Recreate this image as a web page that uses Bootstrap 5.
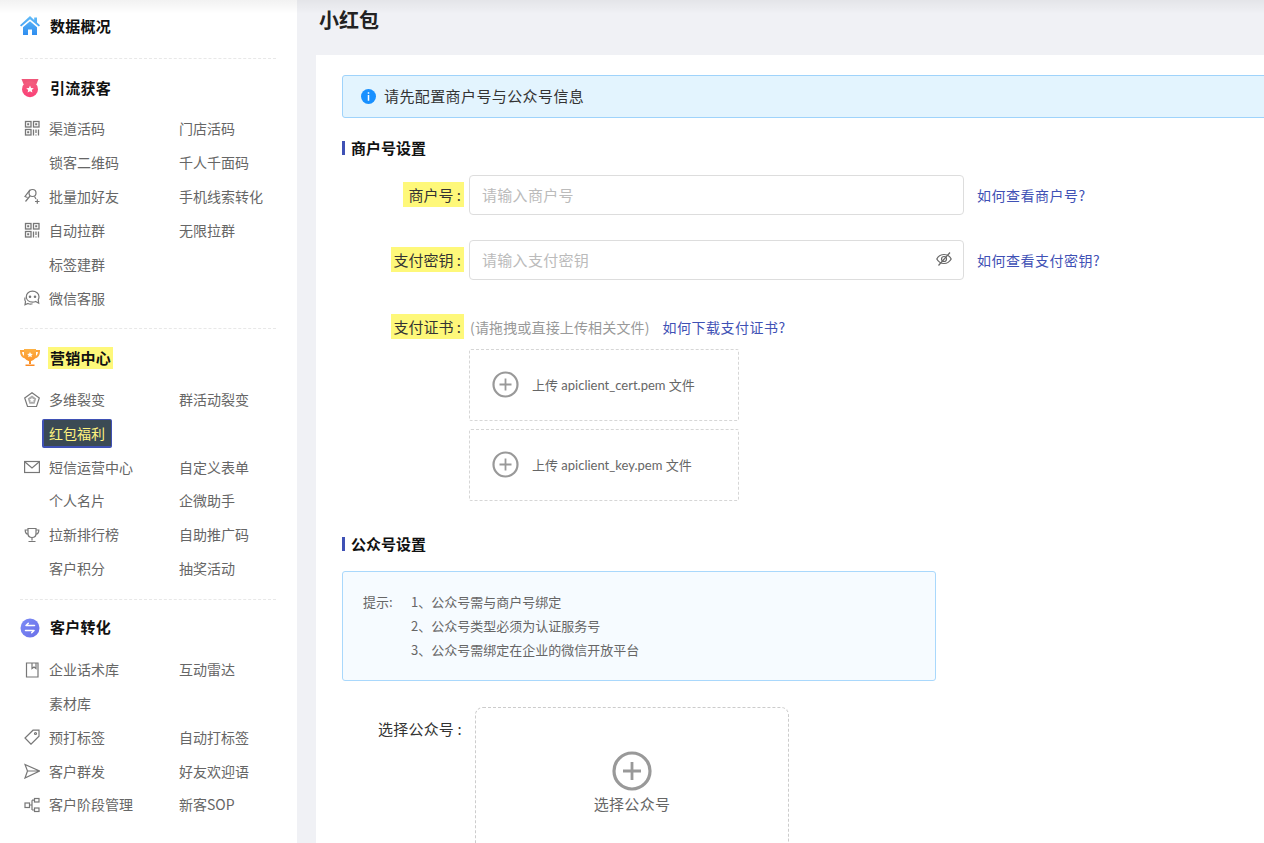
<!DOCTYPE html>
<html lang="zh-CN">
<head>
<meta charset="utf-8">
<title>小红包</title>
<link href="https://cdn.jsdelivr.net/npm/bootstrap@5.3.0/dist/css/bootstrap.min.css" rel="stylesheet">
<style>
html,body{height:843px;overflow:hidden}
body{font-family:"Noto Sans CJK SC","Liberation Sans",sans-serif;font-size:14px;color:#333;background:#f0f1f5}
.shell{height:843px;position:relative}
.topshade{position:absolute;left:0;right:0;top:0;height:14px;background:linear-gradient(#0000000d,#0000);pointer-events:none}
.aside{width:297px;flex:none;background:#fff;padding:9px 21px 0 20px}
.shead{height:34px;font-size:15px;font-weight:700;color:#111;gap:10px;letter-spacing:.25px}
.shead svg{width:20px;height:20px;flex:none}
.hl-head{background:#fef87a;padding:0 2px;height:22px;line-height:22px;margin-left:-2px}
.sep{border-top:1px dashed #e8e8e8;margin:12px 0}
.sep.first{margin-top:15px}
.sep.third{margin:13px 0 11px}
.sgrid{display:grid;grid-template-columns:159px 1fr;grid-auto-rows:34px;margin-top:6px;padding-bottom:1px;color:#666}
.sgrid.tight{grid-auto-rows:33.8px;margin-top:8px;padding-bottom:0}
.sgrid.tight.two{grid-auto-rows:33.7px;padding-bottom:.6px}
.sitem{display:flex;align-items:center;white-space:nowrap}
.sitem svg{width:16px;height:16px;flex:none;margin-left:4px;margin-right:9px;color:#777}
.sp{display:inline-block;width:29px;flex:none}
.cur{background:#3b4a54;color:#fff27f;border:1px solid #3f51b5;border-bottom-width:2px;border-left-width:2px;border-radius:2px;margin-left:-7px;padding:0 6px 0 5px;height:29px;line-height:27px}
.mainc{flex:1;min-width:0;overflow:hidden}
.ptitle{font-size:20px;font-weight:700;color:#222;height:55px;margin-left:22px;padding-top:5px;line-height:30px}
.panel{margin-left:19px;width:1000px;min-height:800px;background:#fff;padding:20px 26px 0}
.note{height:43px;background:#e3f4fe;border:1px solid #9fd3fb;border-radius:3px;padding-left:18px;gap:8px;font-size:15px;letter-spacing:.4px}
.note svg{width:15px;height:15px}
.sectit{font-size:15px;font-weight:700;color:#111;border-left:3px solid #3f51b5;padding-left:6px;line-height:20px;height:14px;display:flex;align-items:center}
.frow{display:flex;align-items:center}
.flabel{width:122px;flex:none;text-align:right;font-size:15px;color:#333;margin-right:5px;white-space:nowrap}
.flabel.top{padding-top:11px}
.hl{background:#fef87a;padding:2px 3px 2px 2px}
.hl.w{padding-left:5px}
.plain{padding-right:2px;letter-spacing:.2px}
.inp{width:495px;height:40px;position:relative;flex:none}
.inp .form-control{height:40px;border:1px solid #ddd;border-radius:4px;font-size:15px;padding:0 12px 1px;letter-spacing:.3px}
.inp .form-control::placeholder{color:#bbb}
.eye{position:absolute;right:12px;top:11px;width:16px;height:16px;color:#666}
.qlink{color:#3f51b5;text-decoration:none;margin-left:13px;letter-spacing:.5px}
.hint{color:#999;margin-left:1px;letter-spacing:.15px}
.upbox{width:270px;height:72px;border:1px dashed #d6d6d6;border-radius:2px;margin-left:127px;padding-left:22px;gap:13px;font-size:13px;color:#666;font-family:Lato,"Noto Sans CJK SC",sans-serif}
.upbox svg{width:27px;height:27px;color:#999;flex:none}
.upbox span{padding-top:2px}
.tipb{width:594px;height:110px;background:#f6fbff;border:1px solid #a9d8fc;border-radius:3px;padding:18px 20px;font-size:13px;color:#666;line-height:24px;display:grid;grid-template-columns:48px 1fr}
.pickb{width:314px;height:180px;border:1px dashed #ccc;border-radius:8px;margin-left:6px;padding-top:43px;font-size:15px;color:#666;gap:2px;letter-spacing:.3px}
.pickb svg{width:40px;height:40px;color:#999}
.m-a{margin-top:23px}.m-b{margin-top:20px}.m-c{margin-top:25px}.m-d{margin-top:36px}.m-e{margin-top:10px}.m-f{margin-top:8px}.m-g{margin-top:36px}.m-h{margin-top:20px}.m-i{margin-top:26px}
</style>
</head>
<body>
<div class="shell d-flex">
  <aside class="aside">
    <div class="shead d-flex align-items-center">
      <svg viewBox="0 0 20 20"><defs><linearGradient id="g1" x1="0" y1="0" x2="0" y2="1"><stop offset="0" stop-color="#62bcf8"/><stop offset="1" stop-color="#2f8df0"/></linearGradient></defs><path fill="url(#g1)" d="M10 0 0 9.200l1.200 1.300L10 3.200l8.800 7.300L20 9.200l-3-2.800V1.500h-2.800v2.400zM3 11.200V19h5v-5.500h4V19h5v-7.800L10 5.200z"/></svg>
      <span>数据概况</span>
    </div>
    <div class="sep first"></div>
    <div class="shead d-flex align-items-center">
      <svg viewBox="0 0 20 20"><defs><linearGradient id="g2" x1="0" y1="0" x2="0" y2="1"><stop offset="0" stop-color="#f2607e"/><stop offset="1" stop-color="#fb3f78"/></linearGradient></defs><path fill="#f0567a" d="M1.500 1h17l-2 5H3.500z"/><circle cx="10" cy="11.200" r="8" fill="url(#g2)"/><path fill="#fff" d="m10 7.500 1.100 2.500 2.700.2-2 1.800.6 2.600-2.400-1.400-2.400 1.400.6-2.600-2-1.800 2.700-.2z"/></svg>
      <span>引流获客</span>
    </div>
    <div class="sgrid">
      <div class="sitem"><svg viewBox="0 0 16 16" fill="none" stroke="currentColor" stroke-width="1.300"><rect x="1.500" y="1.500" width="5.500" height="5.500"/><rect x="9.500" y="1.500" width="5.500" height="5.500"/><rect x="1.500" y="9.500" width="5.500" height="5.500"/><path d="M9.500 9.500v6M12 9.500v3.500M14.500 9.500v6M12 14.500v1"/><path fill="currentColor" stroke="none" d="M3.200 3.200h2v2h-2zM11.200 3.200h2v2h-2zM3.200 11.200h2v2h-2z"/></svg>渠道活码</div>
      <div class="sitem">门店活码</div>
      <div class="sitem"><span class="sp"></span>锁客二维码</div>
      <div class="sitem">千人千面码</div>
      <div class="sitem"><svg viewBox="0 0 16 16" fill="none" stroke="currentColor" stroke-width="1.200"><circle cx="8.500" cy="5" r="3.500"/><path d="M6 1.800 1 8.500l2.500 1M6 8 1.500 13.500M10.500 8.500l1.500 2.500M11 13.500h4.500M13.300 11.200v4.600"/></svg>批量加好友</div>
      <div class="sitem">手机线索转化</div>
      <div class="sitem"><svg viewBox="0 0 16 16" fill="none" stroke="currentColor" stroke-width="1.300"><rect x="1.500" y="1.500" width="5.500" height="5.500"/><rect x="9.500" y="1.500" width="5.500" height="5.500"/><rect x="1.500" y="9.500" width="5.500" height="5.500"/><path d="M9.500 9.500v6M12 9.500v3.500M14.500 9.500v6M12 14.500v1"/><path fill="currentColor" stroke="none" d="M3.200 3.200h2v2h-2zM11.200 3.200h2v2h-2zM3.200 11.200h2v2h-2z"/></svg>自动拉群</div>
      <div class="sitem">无限拉群</div>
      <div class="sitem"><span class="sp"></span>标签建群</div>
      <div class="sitem"></div>
      <div class="sitem"><svg viewBox="0 0 16 16" fill="none" stroke="currentColor" stroke-width="1.200"><path d="M8.500 1.200c3.500 0 6.500 2.300 6.500 5.500 0 1.800-.8 3-.8 3l.5 3.500-3.100-1.700c-.9.400-1.900.6-3 .6-3.600 0-6.300-2.200-6.300-5.400s2.700-5.500 6.200-5.500z"/><path d="M1.200 7.500C.6 9 .8 10.500 1.500 11.500L1 14.800l3-1.300c1.500.8 3 .8 4.500.2"/><circle cx="6" cy="6.800" r=".7" fill="currentColor"/><circle cx="11" cy="6.800" r=".7" fill="currentColor"/></svg>微信客服</div>
      <div class="sitem"></div>
    </div>
    <div class="sep"></div>
    <div class="shead d-flex align-items-center">
      <svg viewBox="0 0 20 20"><defs><linearGradient id="g3" x1="0" y1="0" x2="0" y2="1"><stop offset="0" stop-color="#fdb144"/><stop offset="1" stop-color="#fb8a22"/></linearGradient></defs><path fill="none" stroke="#fca33a" stroke-width="2" d="M4 3H1c0 4 1.500 6 4.500 6.500M16 3h3c0 4-1.500 6-4.500 6.500"/><path fill="url(#g3)" d="M4 1h12v6c0 3.500-2.500 6-6 6S4 10.500 4 7zM9 13h2v3H9zM5.500 16.500h9V18h-9z"/><path fill="#fff" d="m10 4 .9 1.800 2 .2-1.500 1.300.5 2-1.900-1.100-1.900 1.100.5-2L7.100 6l2-.2z"/></svg>
      <span class="hl-head">营销中心</span>
    </div>
    <div class="sgrid tight two">
      <div class="sitem"><svg viewBox="0 0 16 16" fill="none" stroke="currentColor" stroke-width="1.200"><path d="M8 .8 15.300 6l-2.800 8.500h-9L.7 6z"/><path d="M8 3.500 12.200 6.600l-1.600 5.100H5.400L3.800 6.600z" fill="#aaa" stroke="none"/><path d="m8 5.500.8 1.600 1.700.2-1.200 1.200.3 1.700L8 9.400l-1.600.8.300-1.700-1.200-1.200 1.700-.2z" fill="#fff" stroke="none"/></svg>多维裂变</div>
      <div class="sitem">群活动裂变</div>
      <div class="sitem"><span class="sp"></span><span class="cur">红包福利</span></div>
      <div class="sitem"></div>
      <div class="sitem"><svg viewBox="0 0 16 16" fill="none" stroke="currentColor" stroke-width="1.200"><rect x=".6" y="2.500" width="14.800" height="11"/><path d="m1 3 7 6 7-6"/></svg>短信运营中心</div>
      <div class="sitem">自定义表单</div>
      <div class="sitem"><span class="sp"></span>个人名片</div>
      <div class="sitem">企微助手</div>
      <div class="sitem"><svg viewBox="0 0 16 16" fill="none" stroke="currentColor" stroke-width="1.200"><path d="M4 1.500h8v5c0 2.500-1.800 4-4 4s-4-1.500-4-4zM4 3H1.200c0 2.500 1 4 3 4.500M12 3h2.800c0 2.500-1 4-3 4.500M8 10.500v3M4.500 14.500h7"/></svg>拉新排行榜</div>
      <div class="sitem">自助推广码</div>
      <div class="sitem"><span class="sp"></span>客户积分</div>
      <div class="sitem">抽奖活动</div>
    </div>
    <div class="sep third"></div>
    <div class="shead d-flex align-items-center">
      <svg viewBox="0 0 20 20"><defs><linearGradient id="g4" x1="0" y1="0" x2="1" y2="1"><stop offset="0" stop-color="#7c8cf6"/><stop offset="1" stop-color="#6a6fe8"/></linearGradient></defs><circle cx="10" cy="10" r="9.500" fill="url(#g4)"/><path fill="none" stroke="#fff" stroke-width="1.500" stroke-linecap="round" stroke-linejoin="round" d="M14.500 7.500H6l2.300-2.300M5.500 12.500H14l-2.300 2.300"/></svg>
      <span>客户转化</span>
    </div>
    <div class="sgrid tight">
      <div class="sitem"><svg viewBox="0 0 16 16" fill="none" stroke="currentColor" stroke-width="1.200"><path d="M2.500 1h11.500v14H2.500zM8 1v5.500l2-1.500 2 1.500V1"/></svg>企业话术库</div>
      <div class="sitem">互动雷达</div>
      <div class="sitem"><span class="sp"></span>素材库</div>
      <div class="sitem"></div>
      <div class="sitem"><svg viewBox="0 0 16 16" fill="none" stroke="currentColor" stroke-width="1.200"><path d="M9 1.200h6v6L7 15.200 1 9z"/><circle cx="11.500" cy="4.500" r="1"/></svg>预打标签</div>
      <div class="sitem">自动打标签</div>
      <div class="sitem"><svg viewBox="0 0 16 16" fill="none" stroke="currentColor" stroke-width="1.200"><path d="m1 1.500 14.500 6.500L1 15l2.500-7zM3.500 8h12"/></svg>客户群发</div>
      <div class="sitem">好友欢迎语</div>
      <div class="sitem"><svg viewBox="0 0 16 16" fill="none" stroke="currentColor" stroke-width="1.200"><rect x="1" y="6" width="4.500" height="4.500"/><rect x="10.500" y="1.500" width="4.500" height="3.500"/><rect x="10.500" y="11" width="4.500" height="3.500"/><path d="M5.500 8h2.500M8 3.200V13M8 3.200h2.500M8 13h2.500"/></svg>客户阶段管理</div>
      <div class="sitem">新客SOP</div>
    </div>
  </aside>
  <main class="mainc">
    <div class="ptitle">小红包</div>
    <div class="panel">
      <div class="note d-flex align-items-center">
        <svg viewBox="0 0 16 16"><circle cx="8" cy="8" r="8" fill="#1890ff"/><path fill="#fff" d="M7.200 3.500h1.600v1.600H7.200zM7.200 6.500h1.600v6H7.200z"/></svg>
        <span>请先配置商户号与公众号信息</span>
      </div>
      <div class="sectit m-a"><span>商户号设置</span></div>
      <div class="frow m-b">
        <div class="flabel"><span class="hl w">商户号 :</span></div>
        <div class="inp"><input class="form-control" type="text" placeholder="请输入商户号"></div>
        <a class="qlink" href="#">如何查看商户号?</a>
      </div>
      <div class="frow m-c">
        <div class="flabel"><span class="hl">支付密钥 :</span></div>
        <div class="inp"><input class="form-control" type="text" placeholder="请输入支付密钥">
          <svg class="eye" viewBox="0 0 16 16" fill="none" stroke="currentColor" stroke-width="1.200"><path d="M.8 8C2.500 5 5 3.500 8 3.500S13.500 5 15.200 8C13.500 11 11 12.500 8 12.500S2.500 11 .8 8z"/><circle cx="8" cy="8" r="2.500"/><path d="M2.500 14.500 14 1.500"/></svg>
        </div>
        <a class="qlink" href="#">如何查看支付密钥?</a>
      </div>
      <div class="frow m-d">
        <div class="flabel"><span class="hl">支付证书 :</span></div>
        <span class="hint">(请拖拽或直接上传相关文件)</span>
        <a class="qlink" href="#">如何下载支付证书?</a>
      </div>
      <div class="upbox d-flex align-items-center m-e">
        <svg viewBox="0 0 27 27" fill="none" stroke="currentColor" stroke-width="2.200"><circle cx="13.500" cy="13.500" r="12"/><path stroke-width="1.800" d="M13.500 7.500v12M7.500 13.500h12"/></svg>
        <span>上传 apiclient_cert.pem 文件</span>
      </div>
      <div class="upbox d-flex align-items-center m-f">
        <svg viewBox="0 0 27 27" fill="none" stroke="currentColor" stroke-width="2.200"><circle cx="13.500" cy="13.500" r="12"/><path stroke-width="1.800" d="M13.500 7.500v12M7.500 13.500h12"/></svg>
        <span>上传 apiclient_key.pem 文件</span>
      </div>
      <div class="sectit m-g"><span>公众号设置</span></div>
      <div class="tipb m-h">
        <div>提示:</div>
        <div>1、公众号需与商户号绑定<br>2、公众号类型必须为认证服务号<br>3、公众号需绑定在企业的微信开放平台</div>
      </div>
      <div class="d-flex align-items-start m-i">
        <div class="flabel top"><span class="plain">选择公众号 :</span></div>
        <div class="pickb d-flex flex-column align-items-center">
          <svg viewBox="0 0 40 40" fill="none" stroke="currentColor" stroke-width="3.200"><circle cx="20" cy="20" r="18"/><path stroke-width="2.800" d="M20 11v18M11 20h18"/></svg>
          <span>选择公众号</span>
        </div>
      </div>
    </div>
  </main>
  <div class="topshade"></div>
</div>
<script src="https://cdn.jsdelivr.net/npm/bootstrap@5.3.0/dist/js/bootstrap.bundle.min.js"></script>
</body>
</html>
